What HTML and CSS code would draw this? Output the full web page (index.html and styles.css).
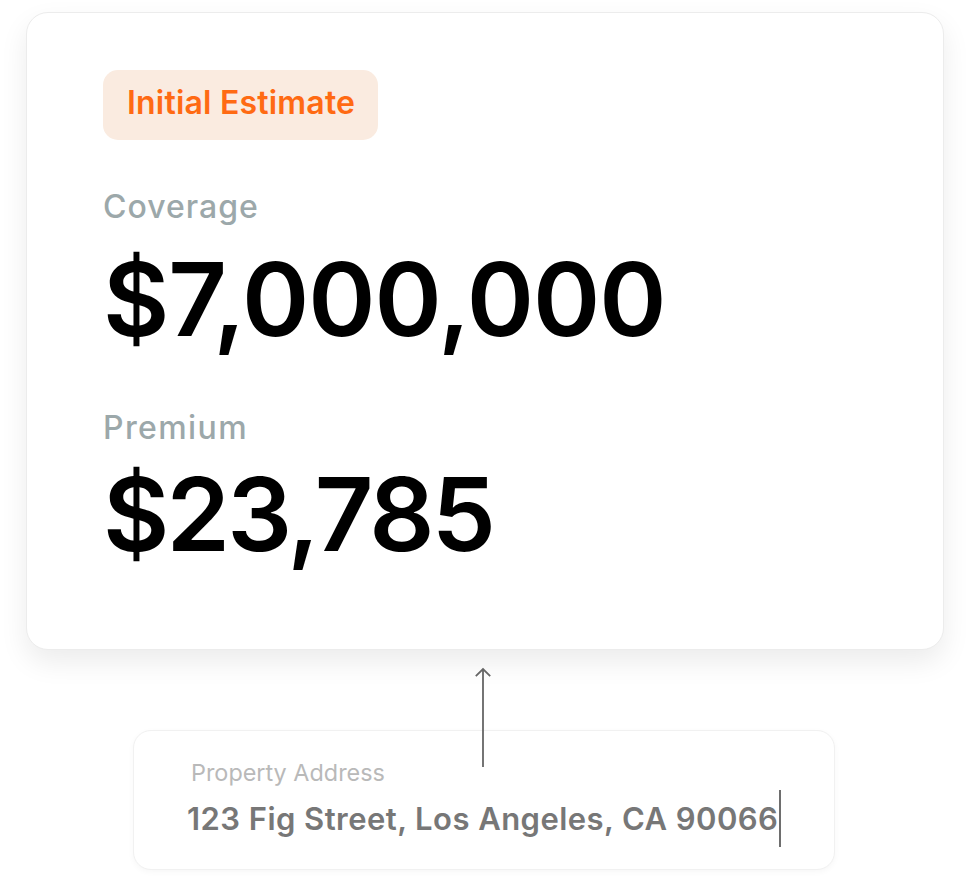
FILE: index.html
```html
<!DOCTYPE html>
<html>
<head>
<meta charset="utf-8">
<link rel="stylesheet" href="styles.css">
</head>
<body>
<div class="page">
  <div class="card">
    <div class="badge">Initial Estimate</div>
    <div class="label label-coverage">Coverage</div>
    <div class="amount amount-coverage">$7,000,000</div>
    <div class="label label-premium">Premium</div>
    <div class="amount amount-premium">$23,785</div>
  </div>
  <div class="connector">
    <svg width="16" height="102" viewBox="0 0 16 102" class="arrow">
      <path d="M8 2 V100 M0.8 9.2 L8 2 L15.2 9.2" fill="none" stroke="#666666" stroke-width="1.8"/>
    </svg>
  </div>
  <div class="input">
    <div class="input-label">Property Address</div>
    <div class="input-value"><span class="input-text">123 Fig Street, Los Angeles, CA 90066</span><span class="caret"></span></div>
  </div>
</div>
</body>
</html>
```
FILE: styles.css
```css
html, body { margin: 0; padding: 0; background: #ffffff; }
body { font-family: Inter, "Noto Sans", sans-serif; }
.page { width: 970px; height: 885px; }
.card {
  margin: 12px 0 0 26px;
  width: 918px;
  height: 638px;
  box-sizing: border-box;
  background: #fff;
  border-radius: 22px;
  border: 1px solid #ececec;
  box-shadow: 0 12px 28px rgba(0,0,0,0.08);
  padding: 57px 0 0 76px;
}
.badge {
  display: inline-block;
  background: #faebe0;
  color: #ff6a13;
  font-weight: 600;
  font-size: 32px;
  line-height: 66px;
  height: 66px;
  padding: 0 23px 4px 24px;
  border-radius: 15px;
  letter-spacing: 0.2px;
}
.label {
  color: #9ca8aa;
  font-size: 32px;
  font-weight: 500;
  line-height: 40px;
}
.label-coverage { margin-top: 47px; letter-spacing: 1px; }
.label-premium { margin-top: 54px; letter-spacing: 1.4px; }
.amount {
  color: #000;
  font-weight: 600;
  font-size: 102px;
  line-height: 110px;
}
.amount-coverage { margin-top: 17px; letter-spacing: -1px; }
.amount-premium { margin-top: 11px; letter-spacing: -2.8px; }
.connector {
  position: relative;
  z-index: 1;
  display: flex;
  padding-left: 475px;
  margin-top: 17px;
  height: 102px;
}
.input {
  margin: -39px 0 0 133px;
  width: 702px;
  height: 140px;
  box-sizing: border-box;
  border-radius: 18px;
  border: 1px solid #f1f1f1;
  box-shadow: 0 2px 6px rgba(0,0,0,0.035);
  padding: 27px 0 0 57px;
  background: #fff;
}
.input-label { color: #b9b9b9; font-size: 23.4px; line-height: 30px; }
.input-value {
  display: flex;
  align-items: center;
  margin-top: 2px;
  margin-left: -4px;
  color: #777777;
  font-weight: 600;
  font-size: 31px;
  line-height: 36px;
  letter-spacing: 0.45px;
}
.caret { display: inline-block; width: 2px; height: 57px; background: #6e6e6e; margin-left: 1px; }
```
